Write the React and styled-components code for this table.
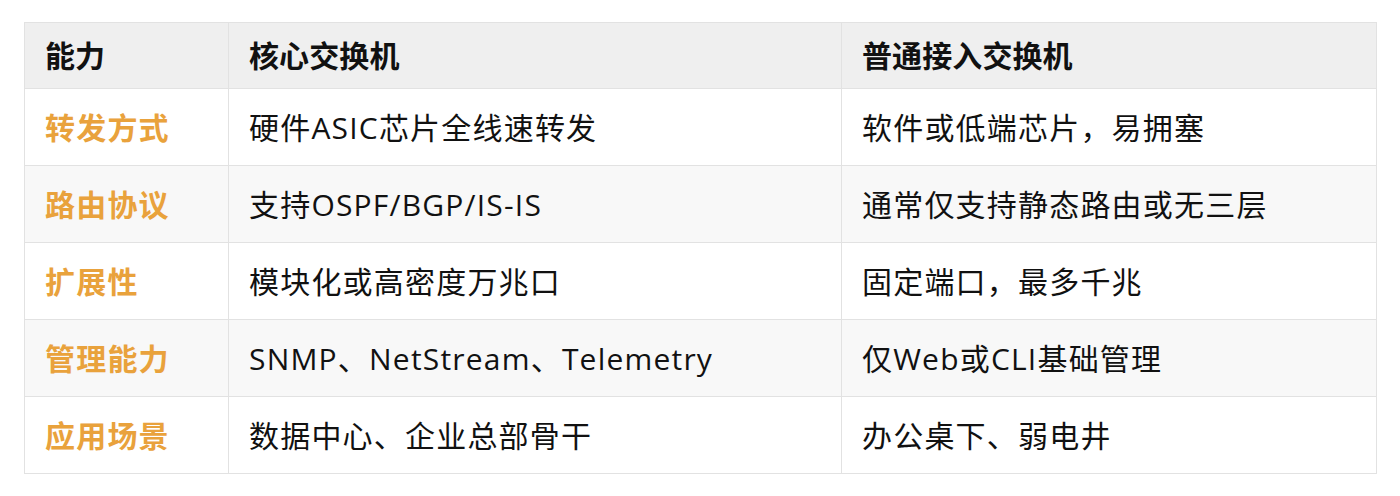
import React from 'react';
import styled, { createGlobalStyle } from 'styled-components';

const GlobalStyle = createGlobalStyle`
  body {
    margin: 0;
    background: #ffffff;
    font-family: "Open Sans", "Noto Sans CJK SC", sans-serif;
  }
`;

const Page = styled.div`
  padding: 22px 24px;
`;

const Table = styled.table`
  width: 1352px;
  border-collapse: collapse;
  table-layout: fixed;
  font-size: 30px;
  color: #111111;
  letter-spacing: 1.2px;
`;

const HeadRow = styled.tr`
  background: #efefef;
  height: 66px;
`;

const Row = styled.tr`
  background: ${p => (p.$striped ? '#f8f8f8' : '#ffffff')};
  height: 77px;
`;

const Th = styled.th`
  border: 1px solid #e2e2e2;
  padding: 0 20px 3px;
  text-align: left;
  font-weight: 700;
  color: #111111;
  letter-spacing: 0.1px;
  white-space: nowrap;
`;

const Td = styled.td`
  border: 1px solid #e2e2e2;
  padding: 0 20px 3px;
  font-weight: ${p => (p.$label ? 700 : 400)};
  color: ${p => (p.$label ? '#e9a23c' : '#111111')};
  white-space: nowrap;
`;

const rows = [
  ['转发方式', '硬件ASIC芯片全线速转发', '软件或低端芯片，易拥塞'],
  ['路由协议', '支持OSPF/BGP/IS-IS', '通常仅支持静态路由或无三层'],
  ['扩展性', '模块化或高密度万兆口', '固定端口，最多千兆'],
  ['管理能力', 'SNMP、NetStream、Telemetry', '仅Web或CLI基础管理'],
  ['应用场景', '数据中心、企业总部骨干', '办公桌下、弱电井'],
];

export default function App() {
  return (
    <Page>
      <GlobalStyle />
      <Table>
        <colgroup>
          <col style={{ width: 204 }} />
          <col style={{ width: 613 }} />
          <col style={{ width: 535 }} />
        </colgroup>
        <thead>
          <HeadRow>
            <Th>能力</Th>
            <Th>核心交换机</Th>
            <Th>普通接入交换机</Th>
          </HeadRow>
        </thead>
        <tbody>
          {rows.map((r, i) => (
            <Row key={r[0]} $striped={i % 2 === 1}>
              <Td $label>{r[0]}</Td>
              <Td>{r[1]}</Td>
              <Td>{r[2]}</Td>
            </Row>
          ))}
        </tbody>
      </Table>
    </Page>
  );
}
